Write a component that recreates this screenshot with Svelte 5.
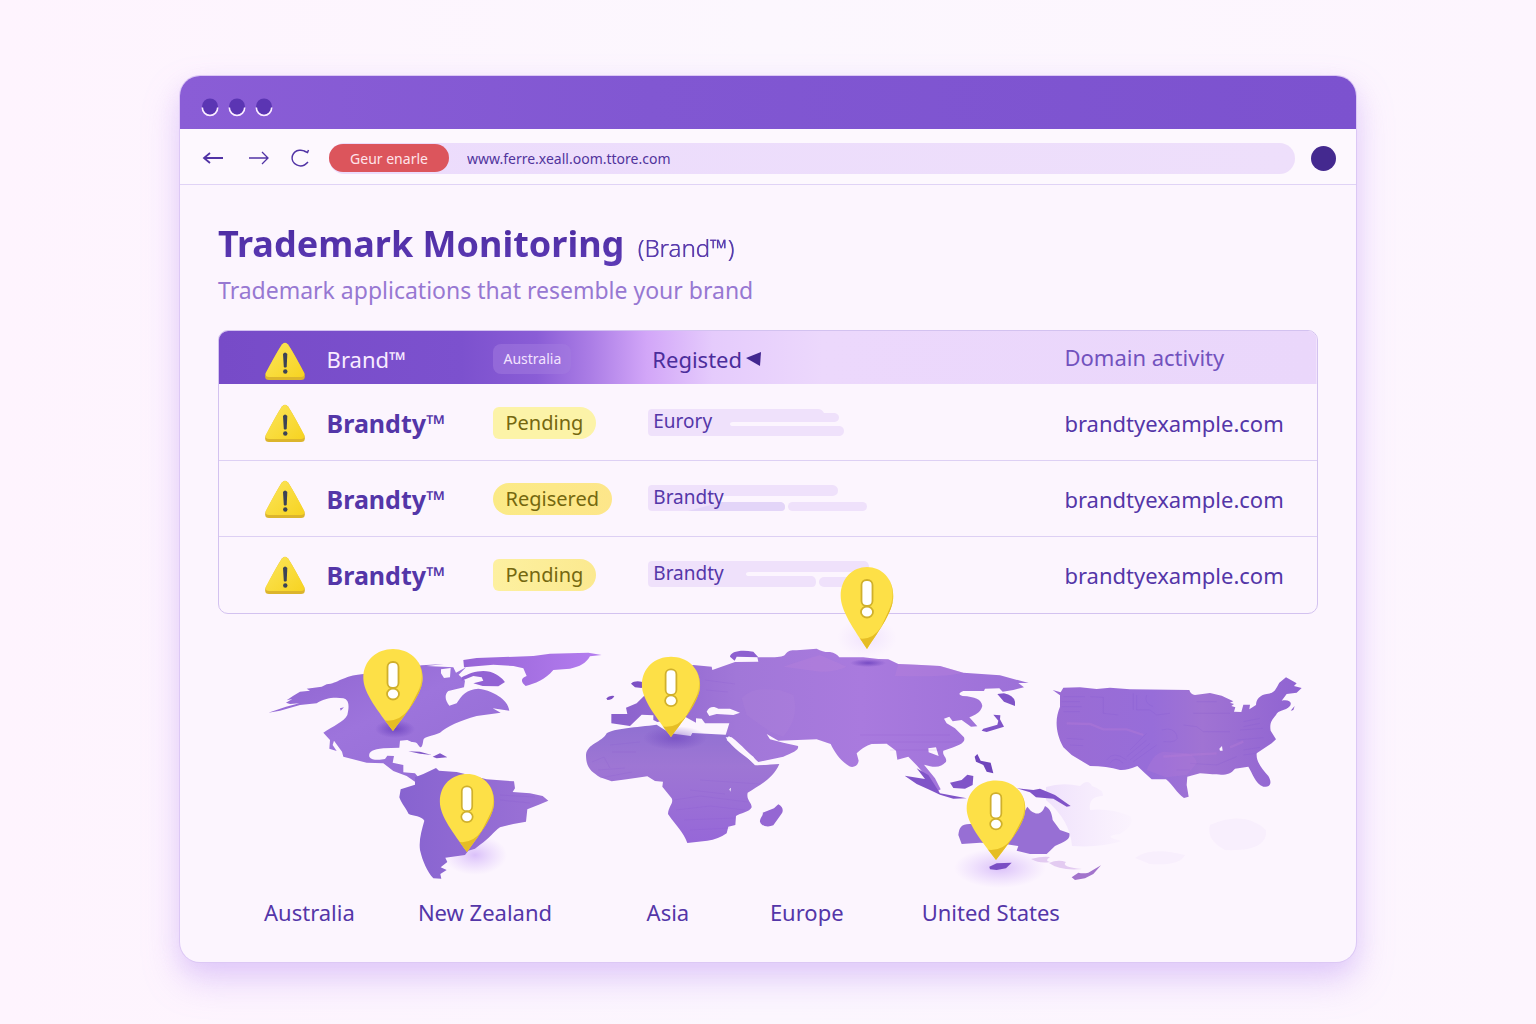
<script>
  const rows = [
    { name: 'Brandty', status: 'Pending', tone: 'soft', region: 'Eurory', shape: 0 },
    { name: 'Brandty', status: 'Regisered', tone: 'strong', region: 'Brandty', shape: 1 },
    { name: 'Brandty', status: 'Pending', tone: 'mid', region: 'Brandty', shape: 2 },
  ];
  const places = ['Australia', 'New Zealand', 'Asia', 'Europe', 'United States'];
  const pins = [
    { x: 393, y: 731, s: 1, w: 1.06 },
    { x: 467, y: 852, s: 0.95, w: 1.02 },
    { x: 671, y: 737, s: 0.98, w: 1.06 },
    { x: 867, y: 649, s: 1, w: 0.94 },
    { x: 996, y: 860, s: 0.97, w: 1.08 },
  ];
</script>

{#snippet warning()}
  <svg class="warning" viewBox="0 0 40 38" role="img" aria-label="Warning">
    <defs>
      <linearGradient id="tri" x1="0" y1="0" x2="1" y2="1">
        <stop offset="0" stop-color="#fbe55a" />
        <stop offset="1" stop-color="#f7d321" />
      </linearGradient>
    </defs>
    <path d="M17 2.500Q20-1 23 2.500Q27 8 39.500 32Q41 38 36 38H4Q-1 38 .5 32Q13 8 17 2.500Z" fill="#dcb52c" />
    <path d="M17 2.500Q20-1 23 2.500Q27 8 39.300 31Q40 35 36 35H4Q0 35 .7 31Q13 8 17 2.500Z" fill="url(#tri)" />
    <path d="M18 12Q20 9 22.300 12L21.700 25Q20 26 18.800 25Z" fill="#3c4356" />
    <circle cx="20.300" cy="29.500" r="2.200" fill="#3c4356" />
  </svg>
{/snippet}

<main>
  <section class="window">
    <header class="titlebar">
      {#each [0, 1, 2] as dot (dot)}
        <svg class="dot" viewBox="0 0 18 19" aria-hidden="true">
          <circle cx="9" cy="8.500" r="8" fill="#5b35b3" />
          <path d="M1.300 9.500A7.700 8 0 0 0 16.700 9.500" fill="none" stroke="#fbeeff" stroke-width="1.600" />
        </svg>
      {/each}
    </header>

    <nav class="toolbar">
      <button aria-label="Back">
        <svg viewBox="0 0 22 16"><path d="M21 8H2M8 3L2 8L8 13" /></svg>
      </button>
      <button aria-label="Forward">
        <svg viewBox="0 0 22 16" class="thin"><path d="M1 8H20M14 2L20 8L14 14" /></svg>
      </button>
      <button aria-label="Reload">
        <svg viewBox="0 0 20 18" class="reload"><path d="M17.500 3.500C13 0 5 0 2.500 6.500C0 15 11 21 18 13M14 2L17.500 3.500L18.500 1" /></svg>
      </button>
      <div class="address">
        <button class="badge">Geur enarle</button>
        <input type="text" aria-label="Address" value="www.ferre.xeall.oom.ttore.com" />
      </div>
      <button class="avatar" aria-label="Profile"></button>
    </nav>

    <div class="content">
      <h1>Trademark Monitoring <small>(Brand™)</small></h1>
      <p class="lead">Trademark applications that resemble your brand</p>

      <div class="frame">
        <table>
          <colgroup>
            <col class="c-icon" /><col class="c-name" /><col class="c-status" /><col class="c-region" /><col class="c-domain" />
          </colgroup>
          <thead>
            <tr>
              <th class="icon">{@render warning()}</th>
              <th class="white">Brand™</th>
              <th><span class="country">Australia</span></th>
              <th class="registered">
                <span>Registed <svg viewBox="0 0 15 14" aria-hidden="true"><path d="M0 6L15 0L14 14Z" fill="#42278f" /></svg></span>
              </th>
              <th class="light">Domain activity</th>
            </tr>
          </thead>
          <tbody>
            {#each rows as row, i (i)}
              <tr>
                <td class="icon">{@render warning()}</td>
                <td class="name">{row.name}<span>™</span></td>
                <td><span class="pill {row.tone}">{row.status}</span></td>
                <td>
                  <div class="region">
                    <svg viewBox="0 0 222 28" aria-hidden="true">
                      {#if row.shape === 0}
                        <path d="M4 0H170Q174 0 176 4H187Q191 5 191 8.500T187 13H85Q82 13 82 15T85 17H192Q196 18 196 22T192 27H4Q0 27 0 23V4Q0 0 4 0Z" />
                      {:else if row.shape === 1}
                        <path d="M4 0H185Q190 1 190 5.500T185 11H70V17H133Q137 18 137 22T133 26H4Q0 26 0 22V4Q0 0 4 0Z" />
                        <path d="M40 26L74 17H133Q137 18 137 22T133 26Z" class="deep" />
                        <rect x="140" y="17" width="79" height="9" rx="4.500" />
                      {:else}
                        <path d="M4 0H216Q220 0 221 5V11H101Q98 11 98 13T101 15H164Q168 16 168 21T164 26H4Q0 26 0 22V4Q0 0 4 0Z" />
                        <rect x="171" y="16" width="48" height="10" rx="5" />
                      {/if}
                    </svg>
                    <span>{row.region}</span>
                  </div>
                </td>
                <td class="domain"><a href="#domain">brandtyexample.com</a></td>
              </tr>
            {/each}
          </tbody>
        </table>
      </div>

      <svg class="map" viewBox="218 614 1100 276" role="img" aria-label="World map with alerts">
        <defs>
          <linearGradient id="america" x1="0" y1="0" x2="1" y2="1">
            <stop offset="0" stop-color="#8f64d0" />
            <stop offset=".45" stop-color="#9d74dc" />
            <stop offset="1" stop-color="#946cd4" />
          </linearGradient>
          <linearGradient id="south" x1="0" y1="0" x2="1" y2="0">
            <stop offset="0" stop-color="#8763d0" />
            <stop offset="1" stop-color="#9c72d6" />
          </linearGradient>
          <linearGradient id="green" x1="0" y1="0" x2="1" y2="0">
            <stop offset="0" stop-color="#9664d6" />
            <stop offset="1" stop-color="#b57df0" />
          </linearGradient>
          <linearGradient id="asia" x1="0" y1="0" x2="1" y2="0">
            <stop offset="0" stop-color="#8a60cc" />
            <stop offset=".3" stop-color="#a177d8" />
            <stop offset=".6" stop-color="#a97ade" />
            <stop offset="1" stop-color="#9c70d8" />
          </linearGradient>
          <linearGradient id="africa" x1="0" y1="0" x2="0" y2="1">
            <stop offset="0" stop-color="#9070d2" />
            <stop offset=".35" stop-color="#9e76d4" />
            <stop offset="1" stop-color="#9667d8" />
          </linearGradient>
          <linearGradient id="states" x1="0" y1="0" x2="1" y2="0">
            <stop offset="0" stop-color="#9a6cd4" />
            <stop offset=".4" stop-color="#976dd9" />
            <stop offset=".6" stop-color="#a073d3" />
            <stop offset="1" stop-color="#8f63d2" />
          </linearGradient>
          <radialGradient id="shade">
            <stop offset="0" stop-color="#6037b8" stop-opacity=".7" />
            <stop offset="1" stop-color="#6037b8" stop-opacity="0" />
          </radialGradient>
          <radialGradient id="glow">
            <stop offset="0" stop-color="#b98cf5" stop-opacity=".5" />
            <stop offset="1" stop-color="#c9a4fa" stop-opacity="0" />
          </radialGradient>
          <linearGradient id="mist" x1="0" y1="0" x2="1" y2="0">
            <stop offset="0" stop-color="#ead9fb" stop-opacity=".7" />
            <stop offset="1" stop-color="#efe2fc" stop-opacity=".1" />
          </linearGradient>
          <clipPath id="tip"><path d="M-28 -53C-28 -71 -15 -82 0 -82S28 -71 28 -53C28 -38 14 -20 0 0C-14 -20 -28 -38 -28 -53Z" /></clipPath>
        </defs>

        <ellipse cx="475" cy="855" rx="32" ry="20" fill="url(#glow)" />
        <ellipse cx="1000" cy="868" rx="46" ry="20" fill="url(#glow)" />
        <ellipse cx="867" cy="638" rx="30" ry="20" fill="url(#glow)" opacity=".35" />

        <path fill="url(#mist)" d="M1046 787Q1062 782 1080 786Q1088 778 1092 786Q1104 790 1103 796Q1088 796 1090 810Q1110 808 1130 816Q1136 824 1120 834Q1100 836 1122 841Q1100 848 1072 846Q1070 820 1046 800Z" />
        <g fill="#e9d8fb">
          <path opacity=".2" d="M1135 858Q1150 846 1185 855Q1180 866 1150 864ZM1210 825Q1245 810 1266 830Q1268 852 1225 850Q1206 840 1210 825Z" />
          <path opacity=".8" fill="#dcc0ee" d="M1031 859Q1042 856 1050 857Q1044 861 1050 862Q1040 864 1031 859ZM1049 863Q1058 859 1066 862Q1060 867 1082 869Q1060 871 1049 863Z" />
        </g>

        <g transform="translate(260 640) scale(.33333)">
          <path fill="url(#america)" fill-rule="evenodd" d="M25 218L78 200L118 190L90 192L78 188L97 177L80 181L100 167L120 155L150 152L140 146L185 140L200 133C235 130 245 108 310 102L485 76L552 72L500 78L580 82L588 98L618 82L596 104L615 122L612 142L565 153C552 165 556 182 568 197L590 190C605 165 620 148 655 146C685 150 700 158 715 168C735 180 745 195 748 212L698 205L722 218L650 228C600 242 560 260 540 278C520 288 492 288 490 300C488 315 486 322 481 322C472 315 474 305 455 306L442 300L420 302L418 323L370 325C335 328 325 337 328 350C334 362 360 360 375 357L382 347L402 348L398 368L430 375L430 397L465 400L475 412L465 425L440 408L400 393L370 370L320 368L250 350L246 335L222 302L218 315L230 333L208 326L210 300L190 278C220 258 252 245 262 225C268 198 268 180 250 175C220 170 190 176 170 190L120 195L60 212ZM543 88L572 84L570 112L552 114L543 100ZM240 205L252 202L242 212Z" />
          <path fill="url(#south)" d="M465 412L490 402L528 384L537 392L590 396L680 418L762 424L765 445L758 456L810 460L848 468L865 482L840 493L802 508L798 545L760 552L720 562C700 575 690 595 660 614L645 626L625 632L615 645L556 653L562 666L542 682L560 690L541 702L544 716L520 715C502 695 488 665 480 630C476 600 485 570 493 542C485 528 460 528 446 522C440 508 425 492 418 472L422 448L465 434Z" />
          <path fill="#8258c8" d="M445 334L480 335L515 345L480 341ZM518 350L540 340L562 352L530 355Z" />
          <path fill="url(#green)" d="M610 60L650 54L820 48L870 41L985 38L1025 45L990 49C978 70 960 80 930 86L880 90C855 120 825 130 797 138C783 128 780 115 800 108L790 85L760 78L700 74L612 82Z" />
          <path fill="#9262d4" d="M605 112C630 98 660 88 690 95C720 105 730 120 735 126L715 139L668 138L640 130L670 122L665 112L640 108L605 122Z" />
        </g>

        <g transform="translate(570 640) scale(.33333)">
          <path fill="url(#asia)" fill-rule="evenodd" d="M124 222L172 222L168 203L200 190L222 168L300 90L370 75L425 80L427 90L495 66L565 65L562 52L600 52C620 52 640 50 645 44C655 32 660 30 680 31L740 26Q762 38 780 36Q800 40 808 52L880 52L925 57L955 58L985 72L1040 74L1110 78L1180 98L1290 106L1376 129L1345 129L1362 142L1330 150L1298 155L1288 145L1245 146L1242 153L1180 153C1165 158 1165 165 1178 168C1215 170 1235 178 1237 198C1232 218 1215 225 1198 232L1222 259L1203 260L1175 240L1148 244L1138 230L1122 236L1130 250L1155 265L1182 292C1188 308 1170 315 1120 332C1116 348 1132 352 1128 365C1115 382 1095 384 1062 374L1095 415L1112 448L1100 455L1078 420L1042 378L1015 350L982 359L978 332L950 311L905 312Q880 320 860 340L866 362C864 378 850 384 838 379C815 365 795 340 782 312L740 298L625 302L590 282L600 298L640 308L684 318C688 330 670 338 640 350L565 366L525 330L480 290L467 285L478 250L405 250L395 236L378 235L378 248L345 230L262 246L250 240L250 226L215 224L180 258L124 250ZM410 215C418 200 430 198 445 206L480 206L510 218L490 225L440 222L418 228ZM1075 325L1098 322L1106 348L1076 337Z" />
          <path fill="#8d5fd0" d="M480 50C482 35 510 28 550 35L565 52L500 50L494 62Z" />
          <path fill="url(#africa)" d="M48 345C52 310 95 308 110 280C130 265 200 262 260 254L300 280L362 288L367 279L466 284L478 285L470 300L525 345L555 376L628 372C610 415 570 435 533 458C528 480 546 488 545 502C540 516 510 520 498 528L496 555L475 560L470 580Q445 598 412 602L352 609C340 575 320 560 294 522C295 498 312 490 305 475L277 440L279 425L255 423L232 409L170 418L125 424L90 412C65 395 48 385 48 345Z" />
          <path fill="#fcf5fe" d="M467 292L485 292C520 320 535 340 550 350L562 368L600 374L560 376C530 350 490 330 467 292ZM478 448L483 443L481 455Z" />
          <path fill="#9567d3" d="M570 545C568 535 582 525 578 518L612 505L625 493C640 500 642 515 632 525L610 556C595 562 575 560 570 545Z" />
          <path fill="#7d50c5" d="M183 131C192 121 215 122 222 130L215 144L195 142ZM109 175Q118 165 133 168Q128 180 112 180Z" />
          <path fill="#bd85d9" opacity=".3" d="M985 72L1110 78L1180 98Q1130 112 975 108ZM640 80Q700 60 750 45L830 80Q800 95 750 95Z" />
          <path fill="#b98adf" opacity=".15" d="M515 175Q540 148 580 148L630 150L670 165Q690 230 640 290L600 275L530 225Z" />
        </g>

        <g transform="translate(800 560) scale(.33333)">
          <g fill="#8054c8">
            <path d="M592 402L612 400Q640 405 645 425V438L612 425ZM580 464L601 466L600 478L612 500L560 516L545 512L550 506L592 494L595 482Z" />
            <path d="M524 590L532 582L542 602L572 608L580 640L560 635L550 615L528 605Z" fill="#6f45bc" />
            <path d="M450 668L485 660L502 644L520 648L518 675L495 686L460 684Z" />
            <path d="M314 647L375 657L350 625L385 645L420 700L500 715L460 716L420 704L385 688L350 672Z" />
            <path d="M650 685L700 690L720 686L765 705L812 738L800 740L760 716L708 712L690 697Z" />
            <path fill="#7a4ec4" d="M568 920L590 910L635 908L618 925L590 930L570 928Z" />
            <path fill="#a274cc" d="M815 952L835 938Q850 942 865 938L903 916L880 942L855 955L825 960Z" />
          </g>
          <path fill="#976fd4" d="M475 825C478 800 485 790 515 792L600 840L670 760L682 740L692 752C710 765 725 765 735 738C748 745 755 755 758 780L780 810L808 820C812 838 795 845 765 858L740 882L690 882L650 872L655 858L600 850L540 848L485 852Z" />
        </g>

        <g transform="translate(1030 660) scale(.33333)">
          <path fill="url(#states)" d="M68 90L92 97L100 83L150 82L200 87L240 83L300 88L478 90Q482 104 495 105L540 99L575 107L610 124L600 128L612 132L604 138L616 142L612 155L634 156L640 134L660 134L658 148L678 135C678 118 690 105 710 102C735 100 738 85 748 68L768 52L800 70L792 78L815 84L800 98L770 102L755 122C775 118 788 125 780 138C765 155 745 148 738 165C725 180 718 190 722 212L738 238L725 250L680 280C678 305 695 325 715 348C728 370 720 382 700 380C675 370 668 340 655 320L615 326C595 350 580 345 510 340L472 350L470 375L476 410L462 414C440 400 430 375 408 358L365 358L345 340L322 318Q290 332 270 330Q230 318 180 318L125 285L100 262C75 215 75 175 90 140L90 106Z" />
          <path fill="none" stroke="#7c4fce" stroke-opacity=".28" stroke-width="2" d="M100 110H165M95 125H150M95 140H155M100 155H150M180 110L220 112L220 160L265 165M310 100V150M320 105V150H360L380 165L420 160M350 105Q340 130 370 140M500 125H560M490 160H600M460 195L500 200L520 215H600M640 185L690 175M640 200L690 190M630 210L700 205M620 240L700 233M110 235L160 238M120 255L160 257M230 300Q250 270 290 300M240 310Q255 285 280 310M300 270L350 220M290 290L350 240M300 300L360 250M310 305L380 255M395 210Q430 200 440 225T400 245M480 310L560 315L620 290M440 330H480M640 270L690 262M640 285L680 280" />
          <path fill="none" stroke="#b47bd6" stroke-opacity=".4" stroke-width="7" d="M110 190L180 192L220 208L290 208L340 225M400 290L470 285L560 280M600 262L640 245" />
          <path fill="#b47bd6" opacity=".3" d="M350 330Q370 280 400 275L470 280Q500 290 500 310L470 345L408 352Z" />
          <path fill="#fcf5fe" d="M568 266L576 258L578 272H570Z" />
          <path fill="#8a5ccc" d="M782 152L794 138L790 150Z" />
        </g>

        <g fill="none" stroke="#7d4fd0" stroke-opacity=".14">
          <path d="M592 762L604 757L610 768M598 770L625 768M610 745L640 742M612 752H636M600 778L632 772M674 800L700 796L748 802M676 810L710 806L745 810M684 820L735 818M690 830L730 828M690 790L725 794M700 780L760 784M500 795L535 797M500 800L530 803M440 810L455 812M705 680L735 684M706 690L728 692" />
          <path d="M860 735H950M870 742H960M890 750H940" />
        </g>

        <ellipse cx="395" cy="729" rx="20" ry="9" fill="url(#shade)" />
        <ellipse cx="675" cy="738" rx="32" ry="12" fill="url(#shade)" opacity=".7" />
        <ellipse cx="868" cy="663" rx="18" ry="4" fill="url(#shade)" />

        {#each pins as pin (pin.x)}
          <g transform="translate({pin.x} {pin.y}) scale({pin.s})">
            <g transform="scale({pin.w} 1)">
              <path d="M-28 -53C-28 -71 -15 -82 0 -82S28 -71 28 -53C28 -38 14 -20 0 0C-14 -20 -28 -38 -28 -53Z" fill="#fde047" />
              <path clip-path="url(#tip)" d="M-14 -12Q4 -6 15 -22L29 -50L30 5H-14Z" fill="#e5bd25" />
              <path clip-path="url(#tip)" d="M20 -76Q31 -60 25 -43T10 -14L30 -38L34 -65Z" fill="#dcb82c" opacity=".55" />
            </g>
            <rect x="-5.500" y="-69" width="11" height="26" rx="5" fill="#fff" stroke="#d0b02c" stroke-width="1.800" />
            <ellipse cx="0" cy="-37" rx="6" ry="5.500" fill="#fff" stroke="#d0b02c" stroke-width="1.800" />
          </g>
        {/each}
      </svg>

      <ul class="places">
        {#each places as place (place)}
          <li>{place}</li>
        {/each}
      </ul>
    </div>
  </section>
</main>

<style>
  :global(body) {
    margin: 0;
    background: #fdf5fe;
  }
  main {
    box-sizing: border-box;
    min-height: 100vh;
    padding: 76px 180px 60px;
    font-family: 'Noto Sans', 'Open Sans', sans-serif;
    color: #5436a8;
    background: linear-gradient(90deg, #fef4fe, #fcf7fe 50%, #fdf5fe);
  }
  .window {
    border-radius: 20px;
    background: #fcf5fe;
    box-shadow: 0 0 0 1px #dcc8f5, 0 18px 36px #b98cf55c, 0 8px 20px #d9bffa4d;
  }
  .titlebar {
    display: flex;
    align-items: center;
    gap: 9px;
    height: 53px;
    box-sizing: border-box;
    padding: 9px 21px 0;
    border-radius: 20px 20px 0 0;
    background: linear-gradient(90deg, #8a5dd6, #8157d2 40%, #7c52cf);
  }
  .dot {
    width: 18px;
    height: 19px;
  }
  .toolbar {
    display: flex;
    align-items: center;
    box-sizing: border-box;
    height: 56px;
    padding: 3px 20px 0 22px;
    border-bottom: 1px solid #e0d3f6;
    background: #fdf8fe;
  }
  button {
    display: flex;
    padding: 0;
    border: 0;
    background: none;
    font: inherit;
  }
  .toolbar > button {
    margin-right: 24px;
  }
  .toolbar button svg {
    width: 22px;
    height: 16px;
    fill: none;
    stroke: #5133a5;
    stroke-width: 1.8;
  }
  .toolbar button svg.thin {
    stroke-width: 1.3;
  }
  .toolbar button svg.reload {
    width: 20px;
    height: 18px;
    margin-right: -5px;
    margin-left: -4px;
    stroke-width: 1.5;
  }
  .address {
    display: flex;
    flex: 1;
    align-items: center;
    height: 31px;
    border-radius: 16px;
    background: linear-gradient(90deg, #ecdcfc, #eedffb);
  }
  .badge {
    justify-content: center;
    align-items: center;
    width: 120px;
    height: 28px;
    border-radius: 14px;
    background: #dc555c;
    color: #ffe4ea;
    font-size: 14px;
  }
  input {
    flex: 1;
    min-width: 0;
    padding: 0 18px;
    border: 0;
    background: none;
    color: #51349c;
    font: 14px 'Noto Sans', sans-serif;
    outline: none;
  }
  .toolbar .avatar {
    width: 25px;
    height: 25px;
    margin: 0 0 0 16px;
    border-radius: 50%;
    background: #44298f;
  }
  .content {
    padding: 37px 38px 34px;
  }
  h1 {
    margin: 0;
    font-size: 36px;
    line-height: 44px;
    font-weight: 700;
    background: linear-gradient(180deg, #4a2a9f, #5f3cb8);
    background-clip: text;
    color: transparent;
  }
  h1 small {
    margin-left: 4px;
    font-size: 24px;
    font-weight: 300;
    color: #5b3aae;
  }
  .lead {
    margin: 4px 0 24px;
    font-size: 23px;
    line-height: 32px;
    color: #9778d2;
  }
  .frame {
    overflow: hidden;
    border: 1px solid #d3c2f0;
    border-radius: 10px;
  }
  table {
    width: 100%;
    table-layout: fixed;
    border-collapse: collapse;
  }
  .c-icon { width: 9.8%; }
  .c-name { width: 15.2%; }
  .c-status { width: 14.1%; }
  .c-region { width: 37.9%; }
  .c-domain { width: 23%; }
  thead {
    background: linear-gradient(90deg, #774bc8, #7c51ce 22%, #8a5dd6 29%, #ac7ee6 34%, #d2a6f8 39%, #e5cbfc 45%, #ecd8fc 55%, #ead7fb);
  }
  th,
  td {
    box-sizing: border-box;
    padding: 0;
    text-align: left;
    white-space: nowrap;
  }
  th {
    height: 53px;
    font-size: 22px;
    line-height: 28px;
    font-weight: 400;
  }
  td {
    height: 76px;
    padding-top: 2px;
    border-bottom: 1px solid #ddd0f4;
  }
  tbody tr:last-child td {
    height: 77px;
    padding-top: 0;
    border-bottom: 0;
  }
  th.icon,
  td.icon {
    padding-left: 46px;
  }
  th.icon {
    padding-top: 6px;
  }
  .warning {
    display: block;
    width: 40px;
    height: 38px;
  }
  th.white {
    padding-top: 2px;
    color: #f8ebff;
  }
  .country {
    display: inline-block;
    padding: 0 10px;
    border-radius: 8px;
    background: #a37bdf80;
    color: #f3e3ff;
    font-size: 14px;
    line-height: 30px;
  }
  th.registered {
    padding: 2px 0 0 4px;
    color: #4b2d9b;
  }
  .registered span {
    display: flex;
    align-items: center;
    gap: 4px;
  }
  .registered svg {
    width: 15px;
    height: 14px;
  }
  th.light {
    padding-bottom: 2px;
    color: #7252be;
  }
  .name {
    font-size: 25px;
    font-weight: 700;
  }
  .name span {
    font-weight: 400;
  }
  .pill {
    display: inline-block;
    padding: 0 13px 0 12px;
    border-radius: 6px 16px 16px 6px;
    font-size: 20px;
    line-height: 32px;
    color: #74670f;
  }
  .soft { background: #fcf3a8; }
  .mid { background: linear-gradient(90deg, #fdf0a0, #fbe98f); }
  .strong {
    border-radius: 16px;
    background: linear-gradient(90deg, #fbea86, #fde68a);
  }
  .region {
    position: relative;
    width: 222px;
    height: 28px;
    font-size: 19px;
    line-height: 24px;
  }
  .region svg {
    position: absolute;
    inset: 0;
    fill: #efe1fb;
  }
  .region .deep {
    fill: #e3d5f8;
  }
  .region span {
    position: relative;
    padding-left: 5px;
  }
  .domain {
    font-size: 22px;
  }
  a {
    color: inherit;
    text-decoration: none;
  }
  .map {
    position: relative;
    display: block;
    width: 100%;
    overflow: visible;
  }
  .places {
    display: grid;
    grid-template-columns: 14.6% 21.7% 11.7% 14.4% 1fr;
    margin: 6px 0 0;
    padding: 0 0 0 46px;
    list-style: none;
    font-size: 22px;
    line-height: 32px;
    white-space: nowrap;
  }
</style>
